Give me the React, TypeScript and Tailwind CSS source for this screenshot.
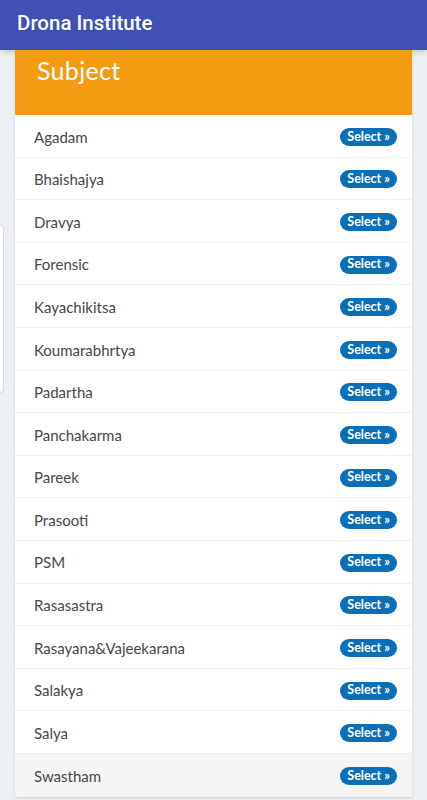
const subjects = [
  "Agadam",
  "Bhaishajya",
  "Dravya",
  "Forensic",
  "Kayachikitsa",
  "Koumarabhrtya",
  "Padartha",
  "Panchakarma",
  "Pareek",
  "Prasooti",
  "PSM",
  "Rasasastra",
  "Rasayana&Vajeekarana",
  "Salakya",
  "Salya",
  "Swastham",
];

export default function App() {
  return (
    <div className="relative min-h-[800px] bg-[#eceff3] font-['Lato',sans-serif]">
      {/* App bar */}
      <header className="h-[50px] bg-[#3f51b5] flex items-center px-[17px] pb-[3px] shadow-md">
        <h1 className="text-white text-[20.5px] font-medium font-['Roboto',sans-serif]">
          Drona Institute
        </h1>
      </header>

      {/* Card */}
      <div className="mx-[15px] bg-white shadow-sm">
        <div className="h-[65px] bg-[#f39c12] px-[22px] pt-[2px]">
          <h2 className="text-white text-[25px] tracking-[0.3px]">Subject</h2>
        </div>
        <ul>
          {subjects.map((name, idx) => (
            <li
              key={name}
              className={
                idx === subjects.length - 1
                  ? "h-[42.6px] flex items-center justify-between pl-[19px] pr-[15px] pt-[2px] bg-[#f5f5f5]"
                  : "h-[42.6px] flex items-center justify-between pl-[19px] pr-[15px] pt-[2px] border-b border-[#eeeeee]"
              }
            >
              <span className="text-[15px] text-[#474747]">{name}</span>
              <button className="h-[18px] px-[7px] rounded-full bg-[#0b6fb8] text-white text-[12.5px] font-bold leading-none">
                Select »
              </button>
            </li>
          ))}
        </ul>
      </div>

      {/* drawer edge peeking from the left */}
      <div className="absolute left-0 top-[225px] w-[4px] h-[168px] bg-white border border-l-0 border-[#d6d9de] rounded-r-sm" />
    </div>
  );
}
